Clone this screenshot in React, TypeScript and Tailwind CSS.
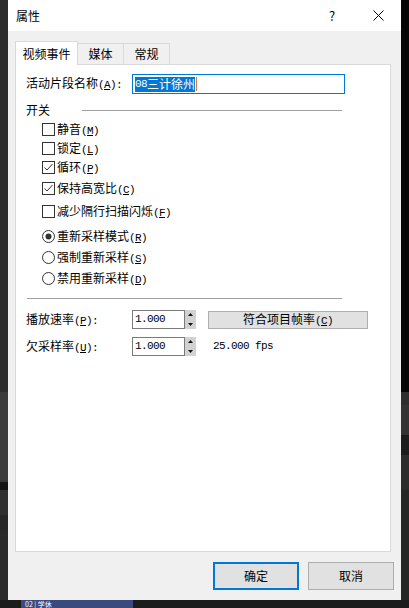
import React from "react";

function Acc({ k, colon }: { k: string; colon?: boolean }) {
  return (
    <span className="font-['Liberation_Mono',monospace] text-[11px] tracking-[-0.6px]">
      (<span className="underline underline-offset-1">{k}</span>){colon ? ":" : ""}
    </span>
  );
}

function CheckBox({ checked }: { checked?: boolean }) {
  return (
    <svg width="13" height="13" viewBox="0 0 13 13" className="shrink-0">
      <rect x="0.5" y="0.5" width="12" height="12" fill="#fff" stroke="#333" />
      {checked && <polyline points="2.5,6.5 5,9 10.5,3" fill="none" stroke="#333" strokeWidth="1" />}
    </svg>
  );
}

function Radio({ checked }: { checked?: boolean }) {
  return (
    <svg width="13" height="13" viewBox="0 0 13 13" className="shrink-0">
      <circle cx="6.5" cy="6.5" r="6" fill="#fff" stroke="#333" />
      {checked && <circle cx="6.5" cy="6.5" r="3" fill="#333" />}
    </svg>
  );
}

function CheckRow({ label, k, checked, className = "" }: { label: string; k: string; checked?: boolean; className?: string }) {
  return (
    <div className={`flex h-[19px] items-center pl-[16px] ${className}`}>
      <CheckBox checked={checked} />
      <span className="ml-[2px] leading-none">
        {label}
        <Acc k={k} />
      </span>
    </div>
  );
}

function RadioRow({ label, k, checked, className = "" }: { label: string; k: string; checked?: boolean; className?: string }) {
  return (
    <div className={`flex h-[21px] items-center pl-[16px] ${className}`}>
      <Radio checked={checked} />
      <span className="ml-[2px] leading-none">
        {label}
        <Acc k={k} />
      </span>
    </div>
  );
}

function Spin() {
  return (
    <div className="flex h-[19px] w-[11px] flex-col items-center justify-between bg-[#d2d2d2] py-[3px]">
      <svg width="5" height="3" viewBox="0 0 5 3">
        <polygon points="2.5,0 5,3 0,3" fill="#111" />
      </svg>
      <svg width="5" height="3" viewBox="0 0 5 3">
        <polygon points="0,0 5,0 2.5,3" fill="#111" />
      </svg>
    </div>
  );
}

function NumInput({ value }: { value: string }) {
  return (
    <div className="flex">
      <div className="flex h-[19px] w-[53px] items-center border border-[#7a7a7a] bg-white pl-[2px] font-['Liberation_Mono',monospace] text-[11px] tracking-[-0.6px]">
        {value}
      </div>
      <Spin />
    </div>
  );
}

export default function App() {
  return (
    <div className="flex h-[608px] w-[409px] flex-col overflow-hidden bg-[#1e1e1e] font-['Noto_Sans_CJK_SC',sans-serif] text-[12px] text-black">
      <div className="flex h-[600px]">
        {/* left background strip */}
        <div className="flex w-[8px] flex-col">
          <div className="h-[392px] bg-[#2c2c2c]" />
          <div className="h-[90px] bg-[#3a3a3a]" />
          <div className="h-[8px] bg-[#161616]" />
          <div className="h-[25px] bg-[#2f2f2f]" />
          <div className="h-[15px] bg-[#262626]" />
          <div className="flex-1 bg-[#2a2a2a]" />
        </div>

        {/* dialog */}
        <div className="flex w-[393px] flex-col bg-[#f0f0f0]">
          <div className="flex h-[31px] items-center bg-white">
            <span className="ml-[8px] text-[12px]">属性</span>
            <div className="ml-auto flex h-full">
              <div className="flex w-[46px] items-center justify-center text-[13px]">?</div>
              <div className="flex w-[46px] items-center justify-center">
                <svg width="11" height="11" viewBox="0 0 11 11">
                  <path d="M0.5 0.5 L10.5 10.5 M10.5 0.5 L0.5 10.5" stroke="#000" strokeWidth="1" />
                </svg>
              </div>
            </div>
          </div>

          <div className="flex flex-1 flex-col px-[7px]">
            {/* tabs */}
            <div className="mt-[10px] flex items-end">
              <div className="relative z-10 -mb-px flex h-[24px] w-[63px] items-center justify-center border border-b-0 border-[#d9d9d9] bg-white">
                视频事件
              </div>
              <div className="flex h-[21px] w-[46px] items-center justify-center border border-b-0 border-l-0 border-[#d9d9d9] bg-[#f0f0f0]">
                媒体
              </div>
              <div className="flex h-[21px] w-[46px] items-center justify-center border border-b-0 border-l-0 border-[#d9d9d9] bg-[#f0f0f0]">
                常规
              </div>
            </div>

            {/* panel */}
            <div className="flex h-[488px] w-[376px] flex-col border border-[#d9d9d9] bg-white px-[10px]">
              <div className="mt-[9px] flex h-[20px] items-center">
                <span className="w-[106px]">
                  活动片段名称
                  <Acc k="A" colon />
                </span>
                <div className="flex h-[20px] w-[213px] items-center border border-[#0078d7] bg-white pl-[2px]">
                  <span className="flex h-[15px] items-center bg-[#0078d7] leading-none text-white">
                    <span className="font-['Liberation_Mono',monospace] text-[11px] tracking-[-0.6px]">08</span>三计徐州
                  </span>
                  <span className="ml-px h-[14px] w-px bg-[#d08040]" />
                </div>
              </div>

              <div className="mt-[8px] flex h-[16px] items-center">
                <span>开关</span>
                <div className="ml-[32px] h-px w-[260px] bg-[#a0a0a0]" />
              </div>

              <CheckRow className="mt-[2px]" label="静音" k="M" />
              <CheckRow label="锁定" k="L" />
              <CheckRow label="循环" k="P" checked />
              <CheckRow className="mt-[2px]" label="保持高宽比" k="C" checked />
              <CheckRow className="mt-[4px]" label="减少隔行扫描闪烁" k="F" />

              <RadioRow className="mt-[5px]" label="重新采样模式" k="R" checked />
              <RadioRow label="强制重新采样" k="S" />
              <RadioRow label="禁用重新采样" k="D" />

              <div className="ml-px mt-[9px] h-px w-[315px] bg-[#a0a0a0]" />

              <div className="mt-[11px] flex h-[19px] items-center">
                <span className="w-[106px]">
                  播放速率
                  <Acc k="P" colon />
                </span>
                <NumInput value="1.000" />
                <div className="ml-[12px] flex h-[18px] w-[160px] items-center justify-center border border-[#adadad] bg-[#e1e1e1]">
                  <span>
                    符合项目帧率
                    <Acc k="C" />
                  </span>
                </div>
              </div>

              <div className="mt-[8px] flex h-[19px] items-center">
                <span className="w-[106px]">
                  欠采样率
                  <Acc k="U" colon />
                </span>
                <NumInput value="1.000" />
                <span className="ml-[17px] font-['Liberation_Mono',monospace] text-[11px] tracking-[-0.6px]">25.000 fps</span>
              </div>
            </div>

            {/* buttons */}
            <div className="mt-[10px] flex justify-end gap-[9px]">
              <div className="flex h-[28px] w-[86px] items-center justify-center border-2 border-[#0078d7] bg-[#e1e1e1]">确定</div>
              <div className="flex h-[28px] w-[86px] items-center justify-center border border-[#adadad] bg-[#e1e1e1]">取消</div>
            </div>
          </div>
        </div>

        {/* right background strip */}
        <div className="flex w-[8px] flex-col">
          <div className="h-[392px] bg-[#050505]" />
          <div className="h-[13px] bg-[#2e2e2e]" />
          <div className="h-[30px] bg-[#333333]" />
          <div className="h-[20px] bg-[#1c1c1c]" />
          <div className="h-[35px] bg-[#2c2c2c]" />
          <div className="flex-1 bg-[#262626]" />
        </div>
      </div>

      {/* bottom background strip */}
      <div className="flex h-[8px]">
        <div className="w-[21px] bg-[#1c1c1c]" />
        <div className="flex w-[112px] items-center bg-[#3b4a7e] pl-[4px] text-[7px] leading-[8px] text-white">02 | 学休</div>
        <div className="flex-1 bg-[#1c1c1c]" />
      </div>
    </div>
  );
}
